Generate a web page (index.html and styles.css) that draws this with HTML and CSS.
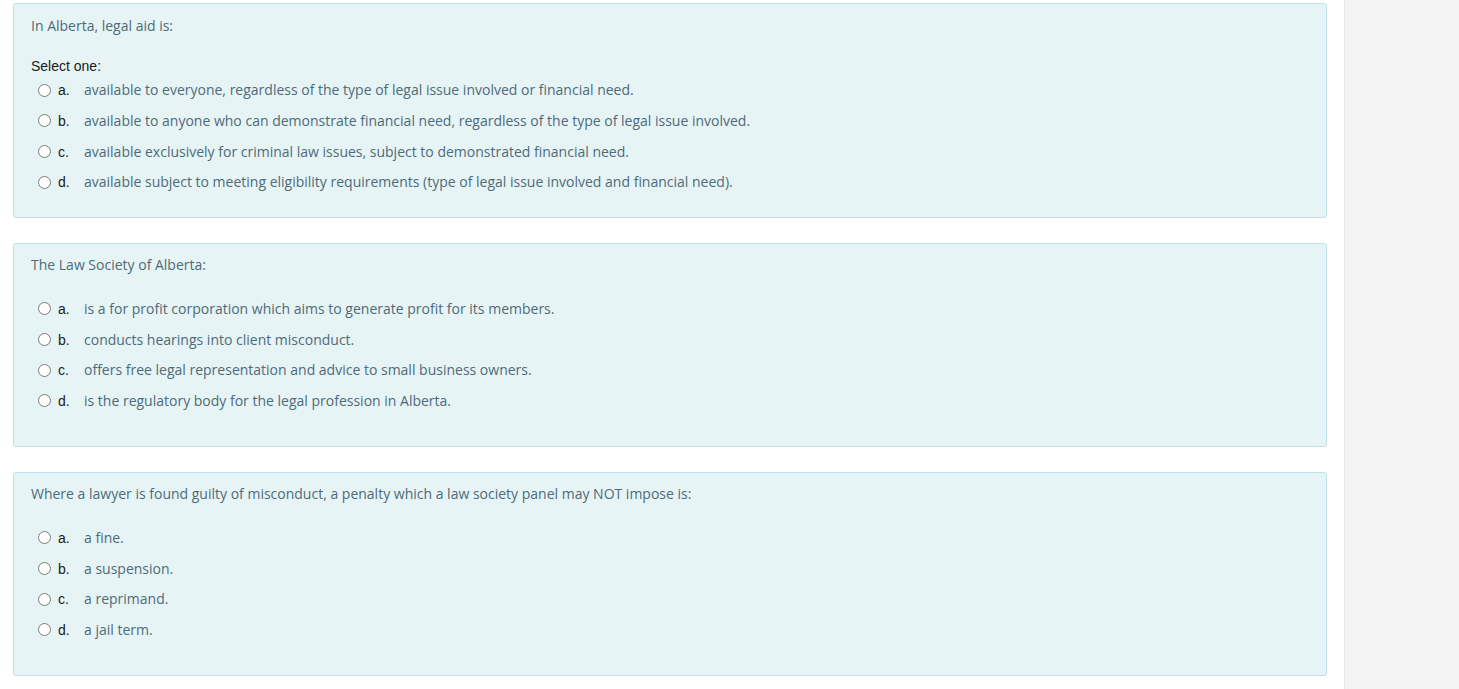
FILE: index.html
```html
<!DOCTYPE html>
<html>
<head>
<meta charset="utf-8">
<link rel="stylesheet" href="styles.css">
</head>
<body>
<div class="page">
  <main class="main">
    <div class="que que-first">
      <div class="qtext">In Alberta, legal aid is:</div>
      <div class="prompt">Select one:</div>
      <div class="answers">
        <label class="opt"><span class="radio"></span><span class="letter">a.</span><span class="atext">available to everyone, regardless of the type of legal issue involved or financial need.</span></label>
        <label class="opt"><span class="radio"></span><span class="letter">b.</span><span class="atext">available to anyone who can demonstrate financial need, regardless of the type of legal issue involved.</span></label>
        <label class="opt"><span class="radio"></span><span class="letter">c.</span><span class="atext">available exclusively for criminal law issues, subject to demonstrated financial need.</span></label>
        <label class="opt"><span class="radio"></span><span class="letter">d.</span><span class="atext">available subject to meeting eligibility requirements (type of legal issue involved and financial need).</span></label>
      </div>
    </div>
    <div class="que">
      <div class="qtext">The Law Society of Alberta:</div>
      <div class="answers">
        <label class="opt"><span class="radio"></span><span class="letter">a.</span><span class="atext">is a for profit corporation which aims to generate profit for its members.</span></label>
        <label class="opt"><span class="radio"></span><span class="letter">b.</span><span class="atext">conducts hearings into client misconduct.</span></label>
        <label class="opt"><span class="radio"></span><span class="letter">c.</span><span class="atext">offers free legal representation and advice to small business owners.</span></label>
        <label class="opt"><span class="radio"></span><span class="letter">d.</span><span class="atext">is the regulatory body for the legal profession in Alberta.</span></label>
      </div>
    </div>
    <div class="que">
      <div class="qtext">Where a lawyer is found guilty of misconduct, a penalty which a law society panel may NOT impose is:</div>
      <div class="answers">
        <label class="opt"><span class="radio"></span><span class="letter">a.</span><span class="atext">a fine.</span></label>
        <label class="opt"><span class="radio"></span><span class="letter">b.</span><span class="atext">a suspension.</span></label>
        <label class="opt"><span class="radio"></span><span class="letter">c.</span><span class="atext">a reprimand.</span></label>
        <label class="opt"><span class="radio"></span><span class="letter">d.</span><span class="atext">a jail term.</span></label>
      </div>
    </div>
  </main>
  <aside class="side"></aside>
</div>
</body>
</html>
```
FILE: styles.css
```css
html, body {
  margin: 0;
  padding: 0;
  background: #ffffff;
}
body {
  font-family: "Open Sans", "Liberation Sans", sans-serif;
  font-size: 14px;
}
.page {
  display: flex;
  min-height: 689px;
}
.main {
  width: 1314px;
  padding: 3px 17px 0 13px;
  display: flex;
  flex-direction: column;
  gap: 25px;
}
.side {
  flex: 1;
  background: #f3f3f3;
  border-left: 1px solid #e6e6e6;
}
.que {
  background: #e7f4f6;
  border: 1px solid #bfe0e6;
  border-radius: 3px;
  padding: 11px 17px 29px 17px;
  height: 204px;
  box-sizing: border-box;
  color: #4d6b79;
}
.que-first {
  padding-top: 12px;
  height: 215px;
}
.qtext {
  line-height: 20px;
}
.prompt {
  font-family: "Liberation Sans", Arial, sans-serif;
  font-size: 14px;
  color: #1a1a1a;
  line-height: 17px;
  margin-top: 22px;
}
.answers {
  display: flex;
  flex-direction: column;
  margin-top: 18.67px;
}
.que-first .answers {
  margin-top: 0;
}
.opt {
  display: flex;
  align-items: center;
  height: 30.67px;
  padding-left: 7px;
  line-height: 20px;
}
.radio {
  width: 13px;
  height: 13px;
  box-sizing: border-box;
  border: 1px solid #7a7a7a;
  border-radius: 50%;
  background: #ffffff;
  margin-right: 7px;
  flex: none;
}
.letter {
  font-family: "Liberation Sans", Arial, sans-serif;
  font-size: 14px;
  color: #1a1a1a;
  width: 26px;
  flex: none;
}
.atext {
  color: #4d6b79;
}
```
